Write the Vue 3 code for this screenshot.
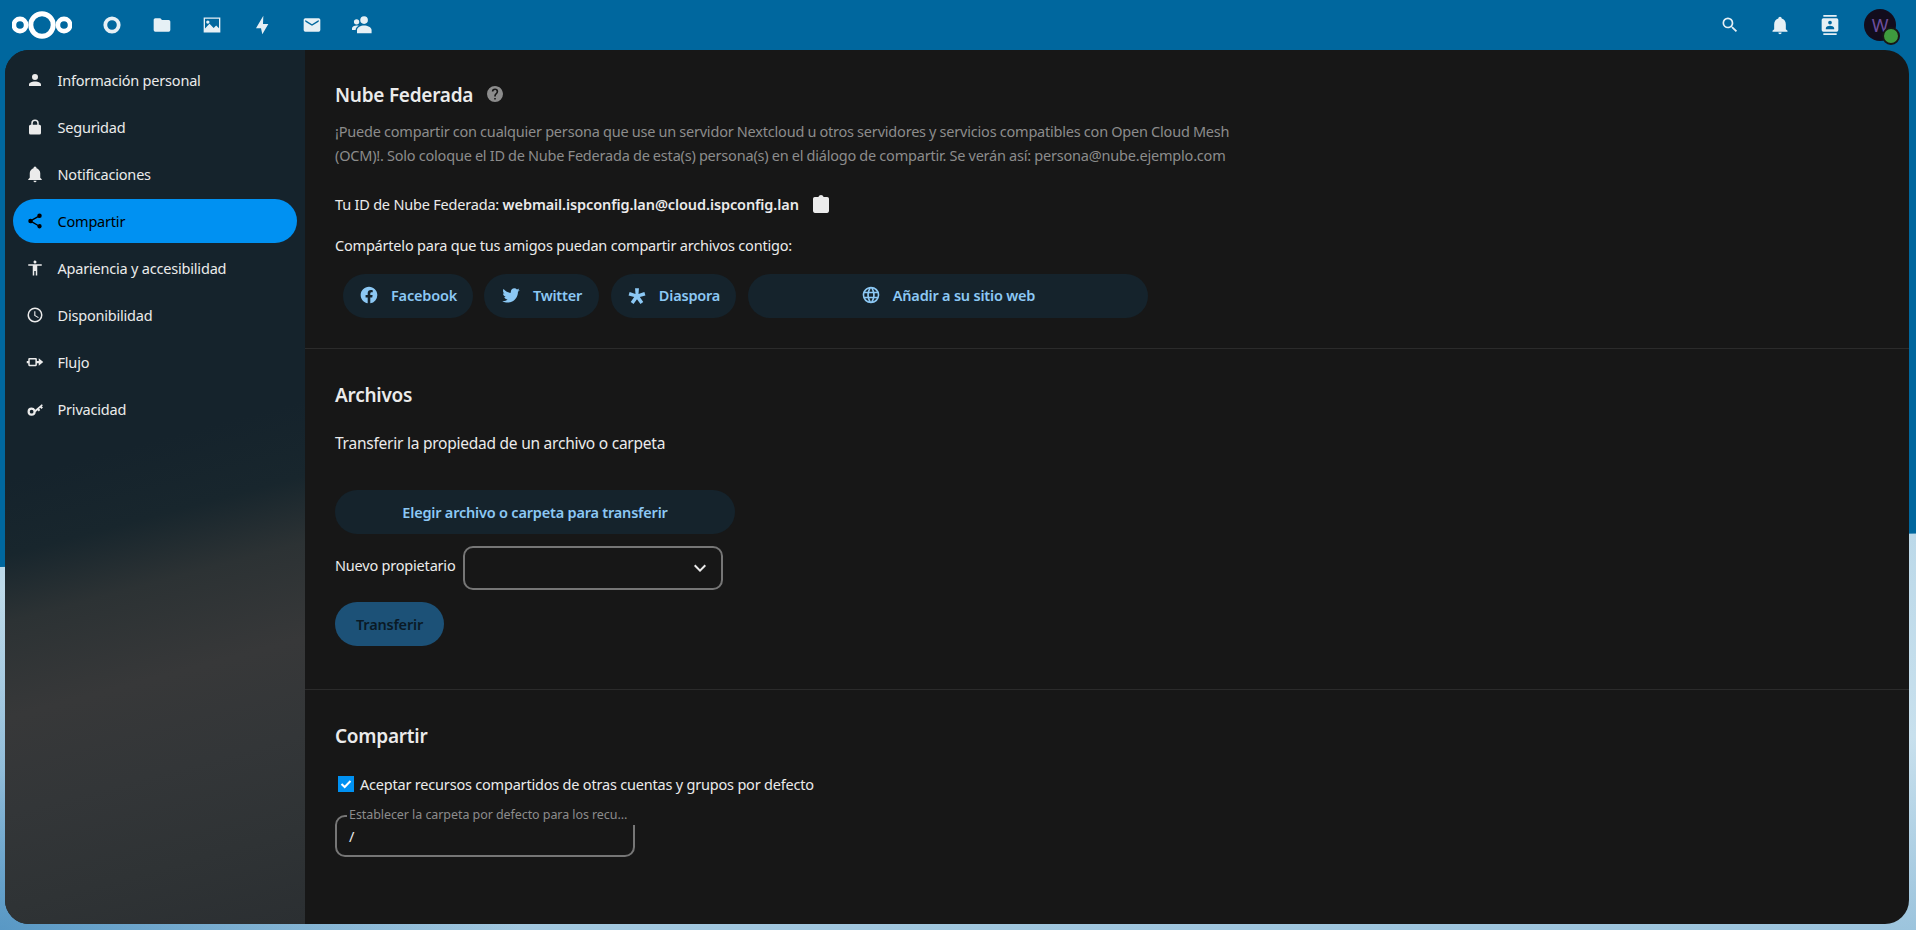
<script setup>
const topApps = [
  { name: 'dashboard', circle: true },
  { name: 'files', d: 'M10,4H4C2.89,4 2,4.89 2,6V18A2,2 0 0,0 4,20H20A2,2 0 0,0 22,18V8C22,6.89 21.1,6 20,6H12L10,4Z' },
  { name: 'photos', d: 'M2,3H22V21H2V3ZM3.6,4.6V16.2L9,10.5L14,15.5L17,12.6L20.4,16V4.6H3.6ZM7,6.5A2,2 0 1,1 7,10.5A2,2 0 1,1 7,6.5Z' },
  { name: 'activity', d: 'M13.6,0.8L4.8,16H10.8L12.4,23.2L19.6,10.8H13.2Z' },
  { name: 'mail', d: 'M20,8L12,13L4,8V6L12,11L20,6M20,4H4C2.89,4 2,4.89 2,6V18A2,2 0 0,0 4,20H20A2,2 0 0,0 22,18V6C22,4.89 21.1,4 20,4Z' },
  { name: 'circles', d: 'M14.5,1.5A4.6,4.6 0 1,1 14.5,10.7A4.6,4.6 0 1,1 14.5,1.5ZM5.5,5A3.2,3.2 0 1,1 5.5,11.4A3.2,3.2 0 1,1 5.5,5ZM14.5,12.5C18.5,12.5 23.5,14.5 23.5,18V22H6V18C6,15 10.5,12.5 14.5,12.5ZM5.5,12.5C6.4,12.5 7.3,12.7 8.2,13C6,14.2 4.3,16 4.3,18H0V16C0,13.8 2.8,12.5 5.5,12.5Z' }
]

const navItems = [
  { label: 'Información personal', d: 'M12,4A4,4 0 0,1 16,8A4,4 0 0,1 12,12A4,4 0 0,1 8,8A4,4 0 0,1 12,4M12,14C16.42,14 20,15.79 20,18V20H4V18C4,15.79 7.58,14 12,14Z' },
  { label: 'Seguridad', d: 'M18,9H17V7A5,5 0 0,0 7,7V9H6A2,2 0 0,0 4,11V20A2,2 0 0,0 6,22H18A2,2 0 0,0 20,20V11A2,2 0 0,0 18,9M9,9V7A3,3 0 0,1 15,7V9H9Z' },
  { label: 'Notificaciones', d: 'M21,19V20H3V19L5,17V11C5,7.9 7.03,5.17 10,4.29C10,4.19 10,4.1 10,4A2,2 0 0,1 12,2A2,2 0 0,1 14,4C14,4.1 14,4.19 14,4.29C16.97,5.17 19,7.9 19,11V17L21,19M14,21A2,2 0 0,1 12,23A2,2 0 0,1 10,21' },
  { label: 'Compartir', active: true, d: 'M18,16.08C17.24,16.08 16.56,16.38 16.04,16.85L8.91,12.7C8.96,12.47 9,12.24 9,12C9,11.76 8.96,11.53 8.91,11.3L15.96,7.19C16.5,7.69 17.21,8 18,8A3,3 0 0,0 21,5A3,3 0 0,0 18,2A3,3 0 0,0 15,5C15,5.24 15.04,5.47 15.09,5.7L8.04,9.81C7.5,9.31 6.79,9 6,9A3,3 0 0,0 3,12A3,3 0 0,0 6,15C6.79,15 7.5,14.69 8.04,14.19L15.16,18.34C15.11,18.55 15.08,18.77 15.08,19C15.08,20.61 16.39,21.91 18,21.91C19.61,21.91 20.92,20.61 20.92,19A2.92,2.92 0 0,0 18,16.08Z' },
  { label: 'Apariencia y accesibilidad', d: 'M21 9H15V22H13V16H11V22H9V9H3V7H21M12 2A2 2 0 0 1 14 4A2 2 0 0 1 12 6C10.89 6 10 5.1 10 4C10 2.89 10.89 2 12 2Z' },
  { label: 'Disponibilidad', d: 'M12,20A8,8 0 0,0 20,12A8,8 0 0,0 12,4A8,8 0 0,0 4,12A8,8 0 0,0 12,20M12,2A10,10 0 0,1 22,12A10,10 0 0,1 12,22C6.47,22 2,17.5 2,12A10,10 0 0,1 12,2M12.5,7V12.25L17,14.92L16.25,16.15L11,13V7H12.5Z' },
  { label: 'Flujo', d: 'M1,10.5H3V8A1.5,1.5 0 0,1 4.5,6.5H13A1.5,1.5 0 0,1 14.5,8V10.5H17V7L23,12L17,17V13.5H14.5V16A1.5,1.5 0 0,1 13,17.5H4.5A1.5,1.5 0 0,1 3,16V13.5H1V10.5M5,8.5V15.5H12.5V8.5H5Z' },
  { label: 'Privacidad', d: 'M7.5,10A5.5,5.5 0 0,1 12.4,13L21,5.5L22.5,7L21,8.4L22.6,10L20.6,12L19,10.4L17.5,11.8L19,13.3L17,15.3L15.5,13.8L13,16A5.5,5.5 0 1,1 7.5,10M7.5,13A2.5,2.5 0 1,0 7.5,18A2.5,2.5 0 1,0 7.5,13Z' }
]

const shareLinks = [
  { label: 'Facebook', cls: 'fb', d: 'M12 2.04C6.5 2.04 2 6.53 2 12.06C2 17.06 5.66 21.21 10.44 21.96V14.96H7.9V12.06H10.44V9.85C10.44 7.34 11.93 5.96 14.22 5.96C15.31 5.96 16.45 6.15 16.45 6.15V8.62H15.19C13.95 8.62 13.56 9.39 13.56 10.18V12.06H16.34L15.89 14.96H13.56V21.96A10 10 0 0 0 22 12.06C22 6.53 17.5 2.04 12 2.04Z' },
  { label: 'Twitter', cls: 'tw', d: 'M22.46,6C21.69,6.35 20.86,6.58 20,6.69C20.88,6.16 21.56,5.32 21.88,4.31C21.05,4.81 20.13,5.16 19.16,5.36C18.37,4.5 17.26,4 16,4C13.65,4 11.73,5.92 11.73,8.29C11.73,8.63 11.77,8.96 11.84,9.27C8.28,9.09 5.11,7.38 3,4.79C2.63,5.42 2.42,6.16 2.42,6.94C2.42,8.43 3.17,9.75 4.33,10.5C3.62,10.5 2.96,10.3 2.38,10C2.38,10 2.38,10 2.38,10.03C2.38,12.11 3.86,13.85 5.82,14.24C5.46,14.34 5.08,14.39 4.69,14.39C4.42,14.39 4.15,14.36 3.89,14.31C4.43,16 6,17.26 7.89,17.29C6.43,18.45 4.58,19.13 2.56,19.13C2.22,19.13 1.88,19.11 1.54,19.07C3.44,20.29 5.7,21 8.12,21C16,21 20.33,14.46 20.33,8.79C20.33,8.6 20.33,8.42 20.32,8.23C21.16,7.63 21.88,6.87 22.46,6Z' },
  { label: 'Diaspora', cls: 'di', d: 'M9.66,3.75H14.34L13.82,10.77L20.84,8.43L22.14,12.46L15.38,14.54L19.54,20.39L16.16,22.86L12,17.01L7.84,22.86L4.46,20.39L8.62,14.54L1.86,12.46L3.16,8.43L10.18,10.77Z' },
  { label: 'Añadir a su sitio web', cls: 'web', d: 'M16.36,14C16.44,13.34 16.5,12.68 16.5,12C16.5,11.32 16.44,10.66 16.36,10H19.74C19.9,10.64 20,11.31 20,12C20,12.69 19.9,13.36 19.74,14M14.59,19.56C15.19,18.45 15.65,17.25 15.97,16H18.92C17.96,17.65 16.43,18.93 14.59,19.56M14.34,14H9.66C9.56,13.34 9.5,12.68 9.5,12C9.5,11.32 9.56,10.65 9.66,10H14.34C14.43,10.65 14.5,11.32 14.5,12C14.5,12.68 14.43,13.34 14.34,14M12,19.96C11.17,18.76 10.5,17.43 10.09,16H13.91C13.5,17.43 12.83,18.76 12,19.96M8,8H5.08C6.03,6.34 7.57,5.06 9.4,4.44C8.8,5.55 8.35,6.75 8,8M5.08,16H8C8.35,17.25 8.8,18.45 9.4,19.56C7.57,18.93 6.03,17.65 5.08,16M4.26,14C4.1,13.36 4,12.69 4,12C4,11.31 4.1,10.64 4.26,10H7.64C7.56,10.66 7.5,11.32 7.5,12C7.5,12.68 7.56,13.34 7.64,14M12,4.03C12.83,5.23 13.5,6.57 13.91,8H10.09C10.5,6.57 11.17,5.23 12,4.03M18.92,8H15.97C15.65,6.75 15.19,5.55 14.59,4.44C16.43,5.07 17.96,6.34 18.92,8M12,2C6.47,2 2,6.5 2,12A10,10 0 0,0 12,22A10,10 0 0,0 22,12A10,10 0 0,0 12,2Z' }
]
</script>

<template>
  <div class="page">
    <header class="topbar">
      <svg class="logo" viewBox="0 0 60 28" width="60" height="28">
        <g fill="none" stroke="#fff">
          <circle cx="8" cy="14" r="6.1" stroke-width="4.6" />
          <circle cx="30" cy="14" r="11.2" stroke-width="5" />
          <circle cx="52" cy="14" r="6.1" stroke-width="4.6" />
        </g>
      </svg>
      <nav class="apps">
        <div v-for="a in topApps" :key="a.name" class="app">
          <svg v-if="a.circle" viewBox="0 0 20 20" width="20" height="20">
            <circle cx="10" cy="10" r="6.7" fill="none" stroke="#e6f0f5" stroke-width="3.8" />
          </svg>
          <svg v-else viewBox="0 0 24 24" width="20" height="20"><path fill="#e6f0f5" :d="a.d" /></svg>
        </div>
      </nav>
      <div class="right">
        <div class="app">
          <svg viewBox="0 0 24 24" width="20" height="20"><path fill="#e6f0f5" d="M9.5,3A6.5,6.5 0 0,1 16,9.5C16,11.11 15.41,12.59 14.44,13.73L14.71,14H15.5L20.5,19L19,20.5L14,15.5V14.71L13.73,14.44C12.59,15.41 11.11,16 9.5,16A6.5,6.5 0 0,1 3,9.5A6.5,6.5 0 0,1 9.5,3M9.5,5C7,5 5,7 5,9.5C5,12 7,14 9.5,14C12,14 14,12 14,9.5C14,7 12,5 9.5,5Z" /></svg>
        </div>
        <div class="app">
          <svg viewBox="0 0 24 24" width="20" height="20"><path fill="#e6f0f5" d="M21,19V20H3V19L5,17V11C5,7.9 7.03,5.17 10,4.29C10,4.19 10,4.1 10,4A2,2 0 0,1 12,2A2,2 0 0,1 14,4C14,4.1 14,4.19 14,4.29C16.97,5.17 19,7.9 19,11V17L21,19M14,21A2,2 0 0,1 12,23A2,2 0 0,1 10,21" /></svg>
        </div>
        <div class="app">
          <svg viewBox="0 0 24 24" width="20" height="20"><path fill="#e6f0f5" d="M20,0H4V2H20V0M4,24H20V22H4V24M20,4H4A2,2 0 0,0 2,6V18A2,2 0 0,0 4,20H20A2,2 0 0,0 22,18V6A2,2 0 0,0 20,4M12,6.75A2.25,2.25 0 0,1 14.25,9A2.25,2.25 0 0,1 12,11.25A2.25,2.25 0 0,1 9.75,9A2.25,2.25 0 0,1 12,6.75M17,17H7V15.5C7,13.83 10.33,13 12,13C13.67,13 17,13.83 17,15.5V17Z" /></svg>
        </div>
        <div class="app">
          <div class="avatar">W<span class="status"></span></div>
        </div>
      </div>
    </header>

    <div class="shell">
      <aside class="sidebar">
        <a v-for="item in navItems" :key="item.label" class="nav-item" :class="{ active: item.active }">
          <svg viewBox="0 0 24 24" width="18" height="18"><path fill="currentColor" :d="item.d" /></svg>
          <span>{{ item.label }}</span>
        </a>
      </aside>

      <main class="content">
        <section class="section first">
          <h2 class="heading">
            <span>Nube Federada</span>
            <svg class="help" viewBox="2 2 20 20" width="16" height="16"><path fill="#8c8c8c" d="M15.07,11.25L14.17,12.17C13.45,12.89 13,13.5 13,15H11V14.5C11,13.39 11.45,12.39 12.17,11.67L13.41,10.41C13.78,10.05 14,9.55 14,9C14,7.89 13.1,7 12,7A2,2 0 0,0 10,9H8A4,4 0 0,1 12,5A4,4 0 0,1 16,9C16,9.88 15.64,10.67 15.07,11.25M13,19H11V17H13M12,2A10,10 0 0,0 2,12A10,10 0 0,0 12,22A10,10 0 0,0 22,12C22,6.47 17.5,2 12,2Z" /></svg>
          </h2>
          <p class="desc">¡Puede compartir con cualquier persona que use un servidor Nextcloud u otros servidores y servicios compatibles con Open Cloud Mesh (OCM)!. Solo coloque el ID de Nube Federada de esta(s) persona(s) en el diálogo de compartir. Se verán así: persona@nube.ejemplo.com</p>
          <p class="id-line">
            <span>Tu ID de Nube Federada: <strong>webmail.ispconfig.lan@cloud.ispconfig.lan</strong></span>
            <svg class="clip" viewBox="3 1 18 20" width="16" height="18"><path fill="#ebebeb" d="M19,3H14.82C14.4,1.84 13.3,1 12,1C10.7,1 9.6,1.84 9.18,3H5A2,2 0 0,0 3,5V19A2,2 0 0,0 5,21H19A2,2 0 0,0 21,19V5A2,2 0 0,0 19,3Z" /></svg>
          </p>
          <p class="share-hint">Compártelo para que tus amigos puedan compartir archivos contigo:</p>
          <div class="share-row">
            <a v-for="l in shareLinks" :key="l.label" class="pill" :class="l.cls">
              <svg viewBox="0 0 24 24" width="20" height="20"><path fill="currentColor" :d="l.d" /></svg>
              <span>{{ l.label }}</span>
            </a>
          </div>
        </section>

        <section class="section second">
          <h2 class="heading">Archivos</h2>
          <p class="transfer-title">Transferir la propiedad de un archivo o carpeta</p>
          <button class="pill choose">Elegir archivo o carpeta para transferir</button>
          <div class="owner">
            <label>Nuevo propietario</label>
            <div class="select">
              <svg viewBox="0 0 24 24" width="24" height="24"><path fill="#ebebeb" d="M7.41,8.58L12,13.17L16.59,8.58L18,10L12,16L6,10L7.41,8.58Z" /></svg>
            </div>
          </div>
          <button class="transfer">Transferir</button>
        </section>

        <section class="section third">
          <h2 class="heading">Compartir</h2>
          <label class="check">
            <span class="box">
              <svg viewBox="0 0 16 16" width="16" height="16"><path fill="none" stroke="#fff" stroke-width="2" d="M3.5,8L6.7,11L12.5,5" /></svg>
            </span>
            <span>Aceptar recursos compartidos de otras cuentas y grupos por defecto</span>
          </label>
          <div class="field">
            <span class="field-label">Establecer la carpeta por defecto para los recu…</span>
            <span class="field-value">/</span>
          </div>
        </section>
      </main>
    </div>
  </div>
</template>

<style scoped>
.page {
  height: 930px;
  overflow: hidden;
  display: flex;
  flex-direction: column;
  font-family: "Noto Sans", sans-serif;
  font-size: 14.5px;
  letter-spacing: -0.2px;
  color: #ebebeb;
  background:
    radial-gradient(ellipse 520px 340px at 0 100%, rgba(70, 140, 190, 0.8), rgba(70, 140, 190, 0) 100%),
    linear-gradient(179deg, #00679e 0, #00679e 58.8%, #bcd9e9 58.9%, #c8e0ed 80%, #9cc4dd 100%);
}
.topbar {
  height: 50px;
  flex: none;
  display: flex;
  align-items: center;
  padding: 0 11px 0 12px;
}
.logo { flex: none; }
.apps { display: flex; margin-left: 15px; }
.right { display: flex; margin-left: auto; }
.app {
  width: 50px;
  height: 50px;
  display: flex;
  align-items: center;
  justify-content: center;
}
.avatar {
  position: relative;
  width: 32px;
  height: 32px;
  border-radius: 50%;
  background: #120c1c;
  color: #6d4f9e;
  font-size: 18px;
  letter-spacing: 0;
  line-height: 32px;
  text-align: center;
}
.status {
  position: absolute;
  right: -4px;
  bottom: -4px;
  width: 14px;
  height: 14px;
  border-radius: 50%;
  background: #3e9b3e;
  border: 2px solid #171717;
}
.shell {
  flex: none;
  height: 874px;
  margin: 0 7px 0 5px;
  display: flex;
  border-radius: 24px;
  overflow: hidden;
  background: #171717;
}
.sidebar {
  width: 300px;
  flex: none;
  box-sizing: border-box;
  padding: 8px;
  display: flex;
  flex-direction: column;
  gap: 3px;
  background: linear-gradient(165deg, #15232c 0, #15232c 45%, #18262d 53%, #2c3234 60%, #373839 70%, #333638 80%, #2f3335 90%, #2b2f32 100%);
}
.nav-item {
  height: 44px;
  flex: none;
  display: flex;
  align-items: center;
  gap: 13.5px;
  padding-left: 13px;
  border-radius: 22px;
  color: #ebebeb;
}
.nav-item svg { flex: none; }
.nav-item.active {
  background: #0091f2;
  color: #000;
}
.content { flex: 1; min-width: 0; }
.section {
  padding: 30px 30px 0;
  box-sizing: border-box;
  border-bottom: 1px solid #2b2b2b;
}
.section.first { height: 299px; }
.section.second { height: 341px; padding-top: 31px; }
.section.third { border-bottom: 0; padding-top: 31px; }
.heading {
  margin: 0;
  display: flex;
  align-items: center;
  font-size: 19px;
  letter-spacing: -0.25px;
  line-height: 30px;
  font-weight: 600;
}
.help { margin-left: 14px; margin-top: -2px; }
.desc {
  margin: 9px 0 0;
  max-width: 900px;
  line-height: 24px;
  letter-spacing: -0.2px;
  word-spacing: -0.3px;
  color: #8c8c8c;
}
.id-line {
  margin: 25px 0 0;
  line-height: 24px;
  display: flex;
  align-items: center;
}
.id-line strong { font-weight: 600; letter-spacing: -0.1px; }
.clip { margin-left: 14px; }
.share-hint { margin: 17px 0 0; line-height: 24px; }
.share-row {
  display: flex;
  gap: 11px;
  margin: 17px 0 0 8px;
}
.pill {
  height: 44px;
  display: flex;
  align-items: center;
  justify-content: center;
  gap: 12px;
  border: 0;
  border-radius: 22px;
  background: #15232c;
  color: #8cc8f4;
  font: 600 14.5px "Noto Sans", sans-serif;
  letter-spacing: -0.2px;
}
.share-row .pill { padding-bottom: 2px; box-sizing: border-box; }
.pill.fb { width: 130px; }
.pill.tw { width: 115px; }
.pill.di { width: 125px; margin-left: 1px; }
.pill.web { width: 400px; margin-left: 1px; }
.transfer-title {
  margin: 21px 0 0;
  font-size: 15.5px;
  letter-spacing: -0.24px;
  line-height: 24px;
}
.choose {
  width: 400px;
  margin-top: 35px;
}
.owner {
  display: flex;
  align-items: center;
  gap: 8px;
  margin-top: 12px;
}
.select {
  width: 260px;
  height: 44px;
  box-sizing: border-box;
  border: 2px solid #767676;
  border-radius: 10px;
  display: flex;
  align-items: center;
  justify-content: flex-end;
  padding-right: 9px;
}
.owner label { margin-top: -6px; }
.transfer {
  display: block;
  width: 109px;
  height: 44px;
  margin-top: 12px;
  border: 0;
  border-radius: 22px;
  background: #1c5177;
  color: #0a1a26;
  font: 600 14.5px "Noto Sans", sans-serif;
  letter-spacing: -0.2px;
}
.check {
  display: flex;
  align-items: center;
  gap: 6px;
  margin: 21px 0 0 3px;
  line-height: 24px;
}
.box {
  width: 16px;
  height: 16px;
  flex: none;
  background: #0091f2;
  display: flex;
}
.field {
  position: relative;
  width: 300px;
  height: 42px;
  box-sizing: border-box;
  margin-top: 19px;
  border: 2px solid #767676;
  border-radius: 10px;
  display: flex;
  align-items: flex-end;
  padding: 0 0 7px 12px;
}
.field-label {
  position: absolute;
  left: 10px;
  right: -4px;
  top: -12px;
  height: 20px;
  padding-left: 2px;
  background: #171717;
  font-size: 12.5px;
  letter-spacing: -0.07px;
  line-height: 20px;
  color: #8c8c8c;
  white-space: nowrap;
}
.field-value { line-height: 24px; }
</style>

<style>
body { margin: 0; }
</style>
